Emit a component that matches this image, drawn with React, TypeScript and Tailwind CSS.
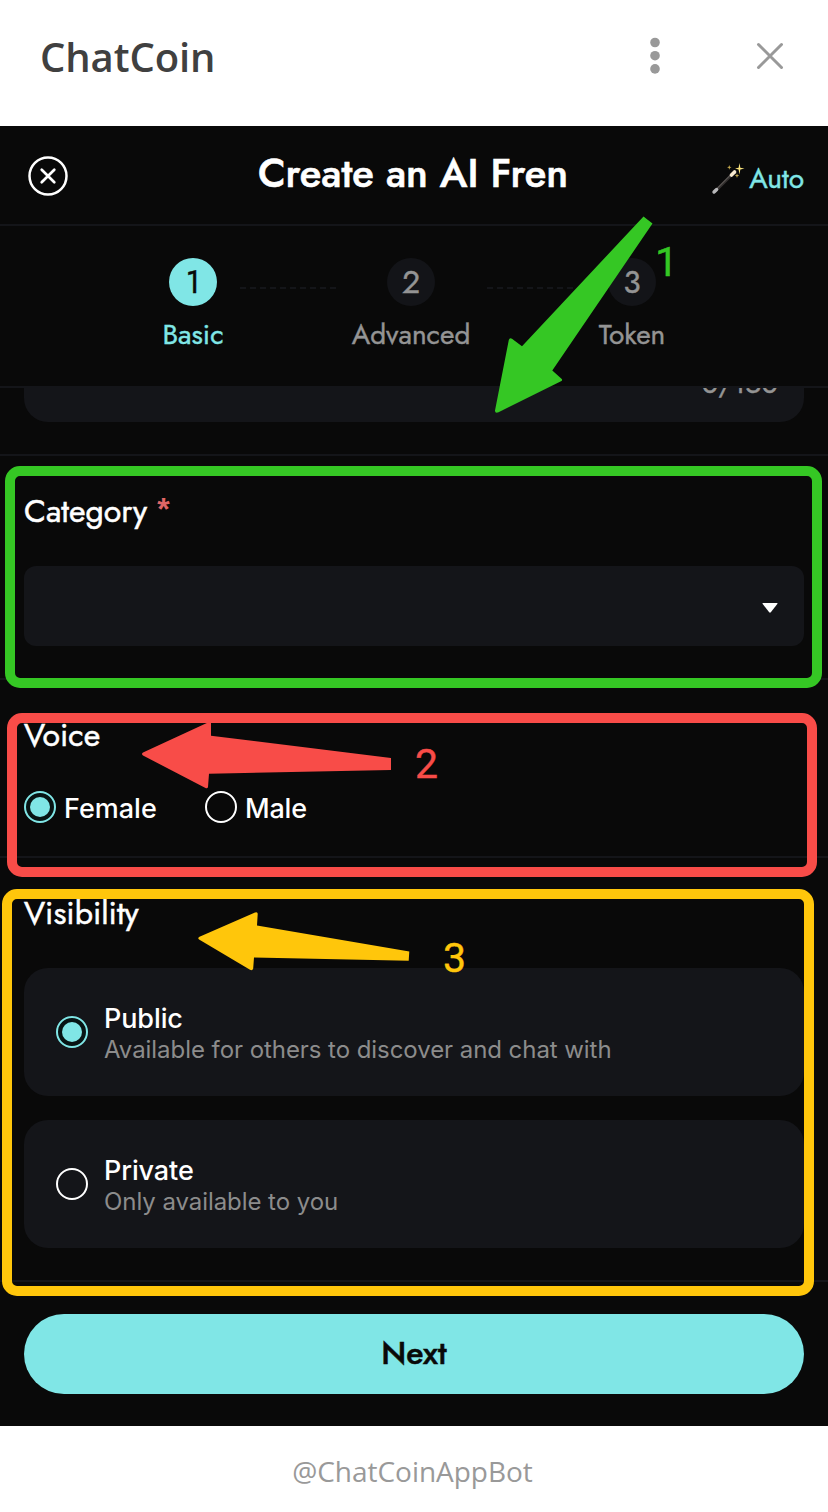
import React from "react";

const geo = "font-[Jost,Lato,sans-serif]";

function Radio({ checked }: { checked?: boolean }) {
  return (
    <span
      className={
        checked
          ? "flex size-8 shrink-0 items-center justify-center rounded-full border-2 border-[#80e6e6] bg-[#071414]"
          : "flex size-8 shrink-0 items-center justify-center rounded-full border-2 border-white"
      }
    >
      {checked && <span className="size-5 rounded-full bg-[#80e6e6]" />}
    </span>
  );
}

function Step({ n, label, active, box }: { n: number; label: string; active?: boolean; box: string }) {
  return (
    <div className={`flex flex-col items-center ${box}`}>
      <div
        className={
          active
            ? "flex size-12 items-center justify-center rounded-full bg-[#80e6e6] text-[#090909]"
            : "flex size-12 items-center justify-center rounded-full bg-[#131418] text-[#949494]"
        }
      >
        <span className="pb-px text-[32px] leading-10 [-webkit-text-stroke:0.4px_currentColor]">{n}</span>
      </div>
      <div
        className={
          active
            ? "mt-[9px] whitespace-nowrap text-[28px] leading-10 text-[#80e6e6] [-webkit-text-stroke:0.4px_currentColor]"
            : "mt-[9px] whitespace-nowrap text-[28px] leading-10 text-[#949494] [-webkit-text-stroke:0.4px_currentColor]"
        }
      >
        {label}
      </div>
    </div>
  );
}

function Dashes() {
  return <div className="mt-[29px] h-0 w-24 shrink-0 border-t-2 border-dashed border-[#141519]" />;
}

function VisibilityOption({ title, text, checked }: { title: string; text: string; checked?: boolean }) {
  return (
    <div className="flex h-32 items-center gap-4 rounded-3xl bg-[#141519] px-8">
      <Radio checked={checked} />
      <div className="flex flex-col pt-[5px] font-[Inter,sans-serif]">
        <span className="text-[27px] leading-8 font-medium tracking-[-0.1px] text-white">{title}</span>
        <span className="-mt-px text-[24px] leading-8 tracking-[-0.06px] text-[#8c8c8c]">{text}</span>
      </div>
    </div>
  );
}

function Wand() {
  return (
    <svg width="34" height="32" viewBox="0 0 34 32" className="shrink-0">
      <path d="M4 28.500 24 8.500" stroke="#33302f" strokeWidth="3" strokeLinecap="round" />
      <path d="M6 25.500 20 11.500" stroke="#6b6663" strokeWidth="1" />
      <path d="M3 29 5.600 26.500" stroke="#b8b8ba" strokeWidth="3.400" strokeLinecap="round" />
      <path d="M20.500 12 23.500 9" stroke="#f8ead0" strokeWidth="3.600" strokeLinecap="round" />
      <path d="M28.500 0 29.300 4.800 33.500 5.600 29.300 6.600 28.500 11.500 27.600 6.600 24 5.600 27.600 4.800Z" fill="#f8e27c" />
      <path d="M18.300 2 18.900 3.800 20.500 4.300 18.900 5 18.300 6.800 17.700 5 16.100 4.300 17.700 3.800Z" fill="#c4a94e" />
      <path d="M26 10.500 26.600 12.100 28.200 12.600 26.600 13.200 26 15 25.400 13.200 23.800 12.600 25.400 12.100Z" fill="#c4a94e" />
    </svg>
  );
}

function Annotations() {
  return (
    <div className="pointer-events-none absolute inset-0 font-[Roboto,sans-serif] text-[41px] leading-[48px] [-webkit-text-stroke:0.4px_currentColor]">
      <div className="absolute top-[466px] left-[5px] h-[222px] w-[817px] rounded-[15px] border-10 border-[#35c724]" />
      <div className="absolute top-[713px] left-[7px] h-[164px] w-[810px] rounded-[15px] border-10 border-[#f84c48]" />
      <div className="absolute top-[889px] left-[2px] h-[407px] w-[812px] rounded-[15px] border-10 border-[#ffc60b]" />
      <svg className="absolute inset-0" width="828" height="1512" viewBox="0 0 828 1512">
        <path d="M643.5 216.5 652.5 223.5 552.3 370.5 561.5 378.8Q563 380.3 561 381.3L498.5 412.3Q494.8 413.5 495 410.5L508.8 340Q509.5 337.5 512 338.7L522 346.3Z" fill="#35c724" />
        <path d="M143 752.5 209 722 211 722V735.8L391 758V770L209 773.8 208 787Q207.500 789 205.500 788L143 755.500Q141 754 143 752.500Z" fill="#f84c48" />
        <path d="M199.500 936.700 255 912.500Q257.800 911.500 257.700 914L257 925.500 409.300 951.500 408.700 960.700 254 957.500 253.200 968.500Q252.500 971 250 969.800L199.500 939.800Q197 938 199.500 936.700Z" fill="#ffc60b" />
      </svg>
      <span className="absolute top-[238px] left-[655px] text-[#35c724]">1</span>
      <span className="absolute top-[740px] left-[415px] text-[#f84c48]">2</span>
      <span className="absolute top-[934px] left-[443px] text-[#ffc60b]">3</span>
    </div>
  );
}

export default function App() {
  return (
    <div className="relative flex h-[1512px] w-[828px] flex-col overflow-hidden bg-white">
      <header className="flex h-[126px] items-center pr-[43px] pb-[13px] pl-10">
        <h1 className="flex-1 font-['Open_Sans',sans-serif] text-[40px] leading-[56px] font-semibold tracking-[-0.1px] text-[#404040]">
          ChatCoin
        </h1>
        <svg className="mb-px" width="12" height="38" viewBox="0 0 12 38" fill="#999">
          <circle cx="6" cy="5.500" r="4.800" />
          <circle cx="6" cy="18.700" r="4.800" />
          <circle cx="6" cy="31.900" r="4.800" />
        </svg>
        <svg className="mb-0.5 ml-[94px]" width="30" height="30" viewBox="0 0 30 30" stroke="#999" strokeWidth="3" strokeLinecap="round">
          <path d="M3.500 3.500 26.500 26.500M26.500 3.500 3.500 26.500" />
        </svg>
      </header>

      <main className={`flex h-[1300px] flex-col bg-[#090909] ${geo}`}>
        <div className="grid h-[100px] grid-cols-[1fr_auto_1fr] items-center border-b-2 border-[#141519] px-6">
          <svg className="mt-0.5 ml-1" width="40" height="40" viewBox="0 0 40 40" fill="none" stroke="#fff" strokeLinecap="round">
            <circle cx="20" cy="20" r="18.500" strokeWidth="2.500" />
            <path d="M13.700 13.700 26.300 26.300M26.300 13.700 13.700 26.300" strokeWidth="2.700" />
          </svg>
          <h2 className="pr-0.5 pb-[5px] text-[40px] leading-[48px] font-medium text-white [-webkit-text-stroke:0.6px_currentColor]">
            Create an AI Fren
          </h2>
          <div className="mt-[7px] flex items-center justify-end gap-1 text-[28px] leading-10 text-[#80e6e6]">
            <Wand />
            <span className="[-webkit-text-stroke:0.4px_currentColor]">Auto</span>
          </div>
        </div>

        <div className="flex h-[162px] justify-center gap-4 border-b-2 border-[#141519] pt-8">
          <Step n={1} label="Basic" active box="w-[61px] pr-px" />
          <Dashes />
          <Step n={2} label="Advanced" box="w-[119px] pr-px" />
          <Dashes />
          <Step n={3} label="Token" box="w-[66px]" />
        </div>

        <div className="flex h-[68px] flex-col overflow-hidden border-b-2 border-[#141519] px-6">
          <div className="flex h-[34px] items-start justify-end rounded-b-3xl bg-[#141519] pr-[26px]">
            <span className="-mt-[24px] text-[28px] leading-10 text-[#949494] [-webkit-text-stroke:0.4px_currentColor] [clip-path:inset(24px_0_0_0)]">
              0/150
            </span>
          </div>
        </div>

        <section className="flex h-[224px] flex-col border-b-2 border-[#141519] px-6 pt-[35px]">
          <div className="flex text-[32px] leading-10 text-white [-webkit-text-stroke:0.5px_currentColor]">
            Category
            <span className="-mt-0.5 ml-2.5 font-['Liberation_Sans',sans-serif] font-bold text-[#e06666] [-webkit-text-stroke:0]">*</span>
          </div>
          <div className="mt-[35px] flex h-20 items-center justify-end rounded-xl bg-[#141519] pr-[26px]">
            <svg className="mt-1" width="16" height="10" viewBox="0 0 16 10" fill="#fff">
              <path d="M1 0H15Q16 0 15.300 1L8.800 9.300Q8 10 7.200 9.300L.7 1Q0 0 1 0Z" />
            </svg>
          </div>
        </section>

        <section className="flex h-[178px] flex-col border-b-2 border-[#141519] px-6 pt-[35px]">
          <div className="text-[32px] leading-10 text-white [-webkit-text-stroke:0.5px_currentColor]">Voice</div>
          <div className="mt-9 flex h-8 items-center font-[Inter,sans-serif] text-[27px] leading-8 font-medium text-white">
            <Radio checked />
            <span className="ml-2 w-[141px] pt-[3px]">Female</span>
            <Radio />
            <span className="ml-2 pt-[3px] tracking-[-0.2px]">Male</span>
          </div>
        </section>

        <section className="flex h-[424px] flex-col border-b-2 border-[#141519] px-6 pt-[35px]">
          <div className="text-[32px] leading-10 text-white [-webkit-text-stroke:0.5px_currentColor]">Visibility</div>
          <div className="mt-[35px] flex flex-col gap-6">
            <VisibilityOption title="Public" text="Available for others to discover and chat with" checked />
            <VisibilityOption title="Private" text="Only available to you" />
          </div>
        </section>

        <div className="px-6 pt-8">
          <button className="flex h-20 w-full items-center justify-center rounded-full bg-[#80e6e6] pb-0.5 text-[32px] font-medium text-[#090909] [-webkit-text-stroke:0.5px_currentColor]">
            Next
          </button>
        </div>
      </main>

      <footer className="flex flex-1 justify-center pt-[25px] pr-[3px] font-['Open_Sans',sans-serif] text-[28px] leading-10 tracking-[-0.03px] text-[#999]">
        @ChatCoinAppBot
      </footer>
      <Annotations />
    </div>
  );
}
